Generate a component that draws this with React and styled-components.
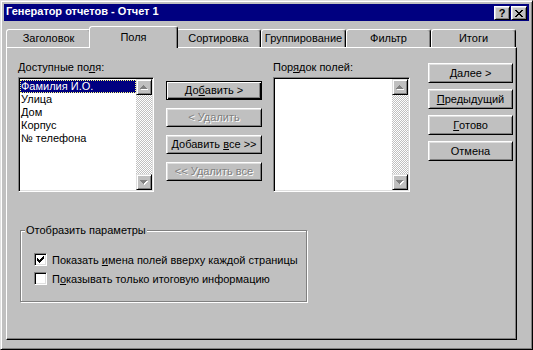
import React from 'react';
import styled, { createGlobalStyle } from 'styled-components';

const GlobalStyle = createGlobalStyle`
  html, body { margin: 0; padding: 0; background: #c0c0c0; }
  body {
    font-family: "Liberation Sans", Arial, sans-serif;
    font-size: 11px;
    color: #000;
  }
  * { box-sizing: border-box; }
`;

const Window = styled.div`
  width: 533px;
  height: 350px;
  background: #c0c0c0;
  border: 1px solid;
  border-color: #dfdfdf #000 #000 #dfdfdf;
  box-shadow: inset 1px 1px #fff, inset -1px -1px #808080;
  padding: 3px;
  display: flex;
  flex-direction: column;
`;

const TitleBar = styled.div`
  height: 17px;
  background: #000080;
  color: #fff;
  display: flex;
  align-items: flex-start;
  padding: 2px 2px 0 2px;
`;

const Title = styled.div`
  flex: 1;
  font-weight: bold;
  font-size: 11px;
  line-height: 13px;
  margin-top: -1px;
  white-space: nowrap;
`;

const CaptionButton = styled.div`
  width: 16px;
  height: 14px;
  margin-left: ${p => p.$gap || 0}px;
  background: #c0c0c0;
  border: 1px solid;
  border-color: #fff #000 #000 #fff;
  box-shadow: inset 1px 1px #dfdfdf, inset -1px -1px #808080;
  display: flex;
  align-items: center;
  justify-content: center;
  color: #000;
  font-weight: bold;
  font-size: 11px;
  line-height: 1;
`;

const Body = styled.div`
  padding: 5px 0 0 2px;
`;

const TabStrip = styled.div`
  display: flex;
  align-items: flex-end;
  height: 21px;
`;

const Tab = styled.div`
  position: relative;
  z-index: ${p => (p.$active ? 1 : 0)};
  width: ${p => (p.$active ? 89 : 85)}px;
  height: ${p => (p.$active ? 22 : 18)}px;
  margin: 0 ${p => (p.$active ? -2 : 0)}px ${p => (p.$active ? -1 : 0)}px;
  background: #c0c0c0;
  border: 1px solid;
  border-bottom: none;
  border-color: #fff #000 transparent #fff;
  border-radius: 3px 3px 0 0;
  box-shadow: inset -1px 0 #808080;
  display: flex;
  justify-content: center;
  align-items: flex-start;
  padding-top: ${p => (p.$active ? 4 : 2)}px;
  line-height: 13px;
  white-space: nowrap;
`;

const Panel = styled.div`
  width: 511px;
  height: 293px;
  border: 1px solid;
  border-color: #fff #000 #000 #fff;
  box-shadow: inset -1px -1px #808080;
  padding: 13px 0 0 11px;
  display: flex;
  flex-direction: column;
  align-items: flex-start;
`;

const TopRow = styled.div`
  display: flex;
  align-items: flex-start;
`;

const ListColumn = styled.div`
  width: ${p => p.$w}px;
  margin-right: ${p => p.$mr}px;
  display: flex;
  flex-direction: column;
  gap: 3px;
`;

const Label = styled.div`
  height: 13px;
  line-height: 13px;
  white-space: nowrap;
`;

const ListBox = styled.div`
  height: 115px;
  display: flex;
  background: #fff;
  border: 1px solid;
  border-color: #808080 #fff #fff #808080;
  box-shadow: inset 1px 1px #000, inset -1px -1px #dfdfdf;
  padding: 1px;
`;

const Items = styled.div`
  flex: 1;
  padding-top: 1px;
  min-width: 0;
`;

const Item = styled.div`
  height: 13px;
  line-height: 11px;
  border: 1px dotted ${p => (p.$selected ? '#ffff7f' : 'transparent')};
  background: ${p => (p.$selected ? '#000080' : 'transparent')};
  color: ${p => (p.$selected ? '#fff' : '#000')};
  white-space: nowrap;
`;

const ScrollBar = styled.div`
  width: 16px;
  display: flex;
  flex-direction: column;
  justify-content: space-between;
  background: conic-gradient(#fff 25%, #c0c0c0 0 50%, #fff 0 75%, #c0c0c0 0) 0 0 / 2px 2px;
`;

const ScrollButton = styled.div`
  width: 16px;
  height: 16px;
  background: #c0c0c0;
  border: 1px solid;
  border-color: #dfdfdf #000 #000 #dfdfdf;
  box-shadow: inset 1px 1px #fff, inset -1px -1px #808080;
  display: flex;
  align-items: center;
  justify-content: center;
`;

const ButtonColumn = styled.div`
  width: ${p => p.$w}px;
  margin-top: ${p => p.$mt}px;
  margin-right: ${p => p.$mr || 0}px;
  display: flex;
  flex-direction: column;
  gap: ${p => p.$gap}px;
`;

const PushButton = styled.div`
  height: ${p => p.$h}px;
  background: #c0c0c0;
  border: 1px solid;
  border-color: ${p => (p.$default ? '#000' : '#fff #000 #000 #fff')};
  box-shadow: ${p =>
    p.$default
      ? 'inset 1px 1px #fff, inset -1px -1px #000, inset -2px -2px #808080'
      : 'inset 1px 1px #dfdfdf, inset -1px -1px #808080'};
  display: flex;
  align-items: center;
  justify-content: center;
  line-height: 13px;
  white-space: pre;
  color: ${p => (p.$disabled ? '#808080' : '#000')};
  text-shadow: ${p => (p.$disabled ? '1px 1px 0 #fff' : 'none')};
`;

const GroupBox = styled.fieldset`
  width: 287px;
  margin: 32px 0 0 2px;
  padding: 13px 0 13px 0;
  border: 1px solid #808080;
  box-shadow: 1px 1px 0 #fff, inset 1px 1px 0 #fff;
  min-width: 0;
`;

const Legend = styled.legend`
  margin-left: 4px;
  padding: 0 1px;
  line-height: 13px;
  background: #c0c0c0;
  white-space: nowrap;
`;

const CheckRow = styled.div`
  height: 19px;
  padding-left: 13px;
  display: flex;
  align-items: center;
  gap: 5px;
  white-space: nowrap;
`;

const CheckBox = styled.span`
  width: 13px;
  height: 13px;
  flex: none;
  background: #fff;
  border: 1px solid;
  border-color: #808080 #fff #fff #808080;
  box-shadow: inset 1px 1px #000, inset -1px -1px #dfdfdf;
  display: flex;
  align-items: center;
  justify-content: center;
`;

const Arrow = ({ down }) => (
  <svg width="8" height="5" viewBox="0 0 8 5" shapeRendering="crispEdges">
    {down ? (
      <>
        <path d="M1 1h7v1h-1v1h-1v1h-1v1H4V4H3V3H2V2H1z" fill="#fff" />
        <path d="M0 0h7v1h-1v1h-1v1h-1v1H3V3H2V2H1V1H0z" fill="#808080" />
      </>
    ) : (
      <>
        <path d="M4 1h1v1h1v1h1v1h1v1H1V4h1V3h1V2h1z" fill="#fff" />
        <path d="M3 0h1v1h1v1h1v1h1v1H0V3h1V2h1V1h1z" fill="#808080" />
      </>
    )}
  </svg>
);

const ScrollBarView = () => (
  <ScrollBar>
    <ScrollButton><Arrow /></ScrollButton>
    <ScrollButton><Arrow down /></ScrollButton>
  </ScrollBar>
);

const CloseGlyph = () => (
  <svg width="8" height="7" viewBox="0 0 8 7" shapeRendering="crispEdges">
    <path d="M0 0h2v1h1v1h2V1h1V0h2v1H7v1H6v1H5v1h1v1h1v1h1v1H6V6H5V5H3v1H2v1H0V6h1V5h1V4h1V3H2V2H1V1H0z" fill="#000" />
  </svg>
);

const CheckGlyph = () => (
  <svg width="7" height="7" viewBox="0 0 7 7" shapeRendering="crispEdges">
    <path d="M6 0h1v3H6v1H5v1H4v1H3v1H2V6H1V5H0V2h1v1h1v1h1V3h1V2h1V1h1z" fill="#000" />
  </svg>
);

const tabs = ['Заголовок', 'Поля', 'Сортировка', 'Группирование', 'Фильтр', 'Итоги'];
const fields = ['Фамилия И.О.', 'Улица', 'Дом', 'Корпус', '№ телефона'];

export default function App() {
  return (
    <>
      <GlobalStyle />
      <Window>
        <TitleBar>
          <Title>Генератор отчетов - Отчет 1</Title>
          <CaptionButton>?</CaptionButton>
          <CaptionButton $gap={1}><CloseGlyph /></CaptionButton>
        </TitleBar>
        <Body>
          <TabStrip>
            {tabs.map(t => (
              <Tab key={t} $active={t === 'Поля'}>{t}</Tab>
            ))}
          </TabStrip>
          <Panel>
            <TopRow>
              <ListColumn $w={136} $mr={12}>
                <Label>Доступные по<u>л</u>я:</Label>
                <ListBox>
                  <Items>
                    {fields.map((f, i) => (
                      <Item key={f} $selected={i === 0}>{f}</Item>
                    ))}
                  </Items>
                  <ScrollBarView />
                </ListBox>
              </ListColumn>
              <ButtonColumn $w={96} $mt={20} $mr={11} $gap={8}>
                <PushButton $h={19} $default>До<u>б</u>авить &gt;</PushButton>
                <PushButton $h={19} $disabled>&lt; Удалить</PushButton>
                <PushButton $h={19}>Добавить{' '}<u>в</u>се &gt;&gt;</PushButton>
                <PushButton $h={19} $disabled>&lt;&lt; Удалить все</PushButton>
              </ButtonColumn>
              <ListColumn $w={137} $mr={18}>
                <Label>Пор<u>я</u>док полей:</Label>
                <ListBox>
                  <Items />
                  <ScrollBarView />
                </ListBox>
              </ListColumn>
              <ButtonColumn $w={85} $mt={2} $gap={6}>
                <PushButton $h={20}><u>Д</u>алее &gt;</PushButton>
                <PushButton $h={20}><u>П</u>редыдущий</PushButton>
                <PushButton $h={20}><u>Г</u>отово</PushButton>
                <PushButton $h={20}>Отмена</PushButton>
              </ButtonColumn>
            </TopRow>
            <GroupBox>
              <Legend>Отобразить параметры</Legend>
              <CheckRow>
                <CheckBox><CheckGlyph /></CheckBox>
                <span>Показать <u>и</u>мена полей вверху каждой страницы</span>
              </CheckRow>
              <CheckRow>
                <CheckBox />
                <span>П<u>о</u>казывать только итоговую информацию</span>
              </CheckRow>
            </GroupBox>
          </Panel>
        </Body>
      </Window>
    </>
  );
}
